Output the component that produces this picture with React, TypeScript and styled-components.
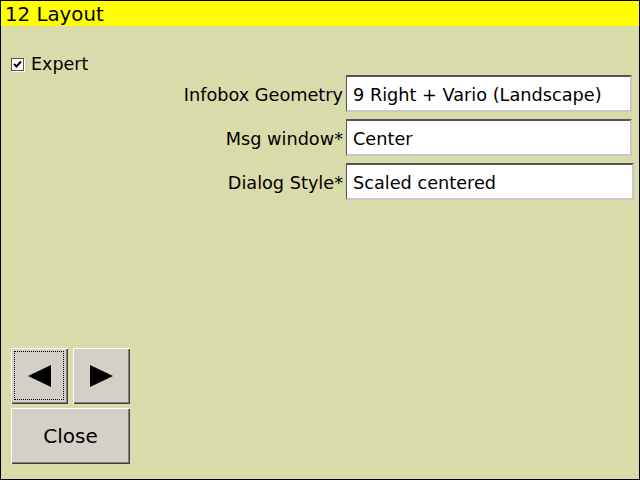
import React from "react";
import styled, { createGlobalStyle } from "styled-components";

const Global = createGlobalStyle`
  html, body { margin: 0; padding: 0; }
  body { font-family: "DejaVu Sans", "Liberation Sans", sans-serif; }
`;

const Window = styled.div`
  width: 640px;
  height: 480px;
  box-sizing: border-box;
  border: 1px solid #000;
  background: #dadbab;
  display: flex;
  flex-direction: column;
  color: #000;
  font-size: 17.7px;
`;

const TitleBar = styled.div`
  height: 25px;
  line-height: 27px;
  background: #ffff00;
  padding-left: 4px;
  font-size: 19.8px;
`;

const Body = styled.div`
  flex: 1;
  display: flex;
  flex-direction: column;
  padding: 0 0 15px 10px;
`;

const CheckRow = styled.label`
  display: flex;
  align-items: center;
  gap: 7px;
  margin-top: 28px;
  height: 20px;
  font-size: 17.5px;
`;

const Box = styled.span`
  width: 11px;
  height: 11px;
  background: #fff;
  border: 1px solid #555;
  box-shadow: 1px 1px 0 #fff;
  display: inline-flex;
  align-items: center;
  justify-content: center;
`;

const Form = styled.div`
  display: grid;
  grid-template-columns: 332px 286px;
  column-gap: 3px;
  row-gap: 7px;
  margin-top: 1px;
`;

const Label = styled.div`
  text-align: right;
  align-self: center;
  white-space: nowrap;
  padding-top: 2px;
`;

const Field = styled.div<{ $w?: number }>`
  height: 37px;
  width: ${(p) => p.$w ?? 286}px;
  box-sizing: border-box;
  background: #fff;
  border-top: 2px solid #555;
  border-left: 1px solid #555;
  border-right: 2px solid #c8c8c8;
  border-bottom: 2px solid #c8c8c8;
  padding: 2px 0 0 6px;
  display: flex;
  align-items: center;
  white-space: nowrap;
`;

const Buttons = styled.div`
  margin-top: auto;
  display: grid;
  grid-template-columns: 57px 57px;
  column-gap: 5px;
  row-gap: 4px;
  width: 120px;
`;

const Button = styled.div<{ $wide?: boolean; $focus?: boolean }>`
  position: relative;
  height: 56px;
  grid-column: ${(p) => (p.$wide ? "1 / span 2" : "auto")};
  background: #d4d0c8;
  box-sizing: border-box;
  box-shadow: inset 1px 1px 0 #fff, inset -1px -1px 0 #404040, inset -2px -2px 0 #808080;
  display: flex;
  align-items: center;
  justify-content: center;
  font-size: 20px;
  &::after {
    content: "";
    display: ${(p) => (p.$focus ? "block" : "none")};
    position: absolute;
    left: 3px;
    top: 3px;
    right: 4px;
    bottom: 4px;
    border: 1px dotted #000;
  }
`;

const Arrow = ({ dir }: { dir: "left" | "right" }) => (
  <svg width="23" height="22" viewBox="0 0 23 22">
    {dir === "left" ? (
      <polygon points="0,11 23,0 23,22" fill="#000" />
    ) : (
      <polygon points="23,11 0,0 0,22" fill="#000" />
    )}
  </svg>
);

export default function App() {
  return (
    <>
      <Global />
      <Window>
        <TitleBar>12 Layout</TitleBar>
        <Body>
          <CheckRow>
            <Box>
              <svg width="9" height="9" viewBox="0 0 9 9">
                <path d="M1 4 L3.5 6.5 L8 1.5" stroke="#000" strokeWidth="2" fill="none" />
              </svg>
            </Box>
            Expert
          </CheckRow>
          <Form>
            <Label>Infobox Geometry</Label>
            <Field>9 Right + Vario (Landscape)</Field>
            <Label>Msg window*</Label>
            <Field>Center</Field>
            <Label>Dialog Style*</Label>
            <Field $w={288}>Scaled centered</Field>
          </Form>
          <Buttons>
            <Button $focus>
              <Arrow dir="left" />
            </Button>
            <Button>
              <Arrow dir="right" />
            </Button>
            <Button $wide>Close</Button>
          </Buttons>
        </Body>
      </Window>
    </>
  );
}
